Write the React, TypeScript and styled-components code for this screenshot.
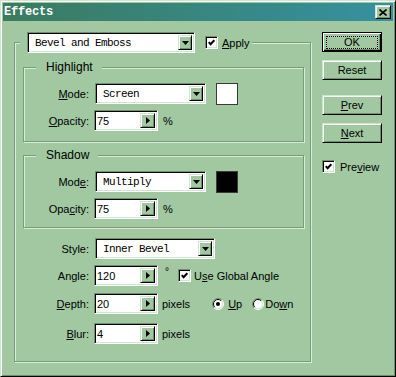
import styled, { createGlobalStyle, css } from 'styled-components'

const FACE = '#a1c8a1'
const HILITE = '#ffffff'
const LIGHT = '#cfe6cf'
const SHADOW = '#6d916d'
const DARK = '#000000'
const ETCH_DARK = '#789c78'
const ETCH_LIGHT = '#d8edd8'

const GlobalStyle = createGlobalStyle`
  * { box-sizing: border-box; }
  html, body { margin: 0; padding: 0; background: ${FACE}; }
  body {
    font-family: "Liberation Sans", Arial, sans-serif;
    font-size: 11px;
    color: #000;
  }
`

const raised = css`
  background: ${FACE};
  border: 1px solid;
  border-color: ${LIGHT} ${DARK} ${DARK} ${LIGHT};
  box-shadow: inset 1px 1px 0 ${HILITE}, inset -1px -1px 0 ${SHADOW};
`

const sunken = css`
  border: 1px solid;
  border-color: ${SHADOW} ${HILITE} ${HILITE} ${SHADOW};
  box-shadow: inset 1px 1px 0 ${DARK}, inset -1px -1px 0 ${LIGHT};
`

const Window = styled.div`
  width: 396px;
  height: 377px;
  padding: 2px;
  display: flex;
  flex-direction: column;
  background: ${FACE};
  border: 1px solid;
  border-color: ${LIGHT} ${DARK} ${DARK} ${LIGHT};
  box-shadow: inset 1px 1px 0 ${HILITE}, inset -1px -1px 0 ${SHADOW};
`

const TitleBar = styled.div`
  height: 18px;
  flex: none;
  display: flex;
  align-items: center;
  justify-content: space-between;
  padding: 0 2px 0 1px;
  background: linear-gradient(to right, #3b7b5f, #3591a0);
`

const TitleText = styled.span`
  color: #fff;
  font-family: "Liberation Mono", "DejaVu Sans Mono", monospace;
  font-weight: bold;
  font-size: 12px;
  letter-spacing: -0.2px;
`

const CloseBox = styled.span`
  ${raised}
  width: 16px;
  height: 14px;
  display: flex;
  align-items: center;
  justify-content: center;
`

const Body = styled.div`
  display: flex;
  align-items: flex-start;
  padding: 11px 0 0 11px;
`

const Frame = styled.fieldset`
  margin: 0;
  padding: 0;
  min-width: 0;
  width: 297px;
  flex: none;
  border: 1px solid ${ETCH_DARK};
  box-shadow: 1px 1px 0 ${ETCH_LIGHT}, inset 1px 1px 0 ${ETCH_LIGHT};
`

const FrameLegend = styled.legend`
  margin-left: 5px;
  padding: 0 2px 0 6px;
  background: ${FACE};
`

const LegendRow = styled.div`
  display: flex;
  align-items: center;
  height: 21px;
`

const FrameBody = styled.div`
  padding: 7px 6px 17px 8px;
`

const Group = styled.fieldset<{ $top?: number }>`
  margin: ${p => p.$top ?? 0}px 0 0 0;
  padding: 0;
  min-width: 0;
  border: 1px solid ${ETCH_DARK};
  box-shadow: 1px 1px 0 ${ETCH_LIGHT}, inset 1px 1px 0 ${ETCH_LIGHT};
`

const GroupLegend = styled.legend`
  margin-left: 12px;
  padding: 0 9px 0 10px;
  font-size: 12px;
  line-height: 14px;
  background: ${FACE};
`

const GroupBody = styled.div<{ $bottom: number }>`
  padding: 9px 0 ${p => p.$bottom}px 0;
`

const Settings = styled.div`
  padding-left: 1px;
`

const Row = styled.div<{ $top?: number }>`
  display: flex;
  align-items: center;
  height: 21px;
  margin-top: ${p => p.$top ?? 0}px;
`

const Label = styled.span`
  flex: none;
  width: 65px;
  margin-right: 5px;
  text-align: right;
  white-space: nowrap;
`

const Key = styled.span`
  text-decoration: underline;
  text-underline-offset: 1px;
`

const Caption = styled.span<{ $gap?: number }>`
  margin-left: ${p => p.$gap ?? 0}px;
  white-space: nowrap;
`

const Degree = styled.span`
  align-self: flex-start;
  margin: 1px 0 0 7px;
  font-size: 10px;
`

const SelectBox = styled.div<{ $width: number }>`
  ${sunken}
  flex: none;
  display: flex;
  align-items: stretch;
  width: ${p => p.$width}px;
  height: 21px;
  margin-left: 1px;
  padding: 2px;
  background: #fff;
`

const SelectText = styled.span`
  flex: 1;
  display: flex;
  align-items: center;
  padding-left: 5px;
  font-family: "Liberation Mono", "DejaVu Sans Mono", monospace;
  font-size: 11px;
  letter-spacing: -0.6px;
  white-space: nowrap;
  overflow: hidden;
`

const ArrowButton = styled.span<{ $width: number }>`
  ${raised}
  flex: none;
  width: ${p => p.$width}px;
  display: flex;
  align-items: center;
  justify-content: center;
`

const NumBox = styled.div`
  ${sunken}
  flex: none;
  display: flex;
  align-items: stretch;
  width: 64px;
  height: 21px;
  padding: 2px;
  background: #fff;
`

const NumValue = styled.span`
  flex: 1;
  display: flex;
  align-items: center;
  padding-left: 0;
`

const Swatch = styled.span<{ $color: string }>`
  flex: none;
  width: 22px;
  height: 22px;
  margin-left: 10px;
  background: ${p => p.$color};
  border: 1px solid #3a3a3a;
`

const CheckBox = styled.span<{ $gap?: number }>`
  ${sunken}
  flex: none;
  width: 13px;
  height: 13px;
  margin-left: ${p => p.$gap ?? 0}px;
  background: #fff;
  display: flex;
  align-items: center;
  justify-content: center;
`

const RadioMark = styled.svg<{ $gap?: number }>`
  flex: none;
  margin-left: ${p => p.$gap ?? 0}px;
`

const Side = styled.div`
  flex: none;
  width: 60px;
  margin-left: 11px;
  display: flex;
  flex-direction: column;
`

const Button = styled.button<{ $top?: number }>`
  ${raised}
  width: 60px;
  height: 20px;
  margin: ${p => p.$top ?? 0}px 0 0 0;
  padding: 0;
  font: inherit;
  color: #000;
  display: flex;
  align-items: center;
  justify-content: center;
`

const DefaultButton = styled(Button)`
  border: 1px solid ${DARK};
  box-shadow: inset 1px 1px 0 ${HILITE}, inset -1px -1px 0 ${DARK}, inset -2px -2px 0 ${SHADOW};
`

const FocusRing = styled.span`
  width: 52px;
  height: 13px;
  border: 1px dotted #000;
  display: flex;
  align-items: center;
  justify-content: center;
`

const CheckRow = styled.div<{ $top?: number }>`
  display: flex;
  align-items: center;
  margin-top: ${p => p.$top ?? 0}px;
`

const Check = () => (
  <svg width="7" height="7" viewBox="0 0 7 7">
    <polyline points="0.8,3.2 2.6,5.2 6.3,1.2" fill="none" stroke="#000" strokeWidth="2" />
  </svg>
)

const Radio = ({ on, gap }: { on?: boolean; gap?: number }) => (
  <RadioMark $gap={gap} width="12" height="12" viewBox="0 0 12 12">
    <circle cx="6" cy="6" r="5" fill="#fff" />
    <path d="M2.1 9.9 A5.5 5.5 0 0 1 9.9 2.1" fill="none" stroke={SHADOW} />
    <path d="M9.9 2.1 A5.5 5.5 0 0 1 2.1 9.9" fill="none" stroke={HILITE} />
    <path d="M2.8 9.2 A4.5 4.5 0 0 1 9.2 2.8" fill="none" stroke="#000" />
    <path d="M9.2 2.8 A4.5 4.5 0 0 1 2.8 9.2" fill="none" stroke={LIGHT} />
    {on && <circle cx="6" cy="6" r="2" fill="#000" />}
  </RadioMark>
)

const Select = ({ width, value }: { width: number; value: string }) => (
  <SelectBox $width={width}>
    <SelectText>{value}</SelectText>
    <ArrowButton $width={14}>
      <svg width="7" height="4" viewBox="0 0 7 4">
        <polygon points="0,0 7,0 3.5,4" fill="#000" />
      </svg>
    </ArrowButton>
  </SelectBox>
)

const NumField = ({ value }: { value: string }) => (
  <NumBox>
    <NumValue>{value}</NumValue>
    <ArrowButton $width={15}>
      <svg width="4" height="7" viewBox="0 0 4 7">
        <polygon points="0,0 4,3.5 0,7" fill="#000" />
      </svg>
    </ArrowButton>
  </NumBox>
)

export default function App() {
  return (
    <>
      <GlobalStyle />
      <Window>
        <TitleBar>
          <TitleText>Effects</TitleText>
          <CloseBox>
            <svg width="8" height="7" viewBox="0 0 8 7">
              <path d="M0.5 0.5 L7.5 6.5 M7.5 0.5 L0.5 6.5" stroke="#000" strokeWidth="1.6" />
            </svg>
          </CloseBox>
        </TitleBar>
        <Body>
          <Frame>
            <FrameLegend>
              <LegendRow>
                <Select width={168} value="Bevel and Emboss" />
                <CheckBox $gap={10}><Check /></CheckBox>
                <Caption $gap={4}><Key>A</Key>pply</Caption>
              </LegendRow>
            </FrameLegend>
            <FrameBody>
              <Group>
                <GroupLegend>Highlight</GroupLegend>
                <GroupBody $bottom={10}>
                  <Row>
                    <Label><Key>M</Key>ode:</Label>
                    <Select width={111} value="Screen" />
                    <Swatch $color="#ffffff" />
                  </Row>
                  <Row $top={6}>
                    <Label><Key>O</Key>pacity:</Label>
                    <NumField value="75" />
                    <Caption $gap={5}>%</Caption>
                  </Row>
                </GroupBody>
              </Group>
              <Group $top={6}>
                <GroupLegend>Shadow</GroupLegend>
                <GroupBody $bottom={8}>
                  <Row>
                    <Label>Mod<Key>e</Key>:</Label>
                    <Select width={111} value="Multiply" />
                    <Swatch $color="#000000" />
                  </Row>
                  <Row $top={6}>
                    <Label>Opa<Key>c</Key>ity:</Label>
                    <NumField value="75" />
                    <Caption $gap={5}>%</Caption>
                  </Row>
                </GroupBody>
              </Group>
              <Settings>
                <Row $top={10}>
                  <Label>Style:</Label>
                  <Select width={120} value="Inner Bevel" />
                </Row>
                <Row $top={6}>
                  <Label>Angle:</Label>
                  <NumField value="120" />
                  <Degree>°</Degree>
                  <CheckBox $gap={9}><Check /></CheckBox>
                  <Caption $gap={3}>U<Key>s</Key>e Global Angle</Caption>
                </Row>
                <Row $top={7}>
                  <Label><Key>D</Key>epth:</Label>
                  <NumField value="20" />
                  <Caption $gap={4}>pixels</Caption>
                  <Radio on gap={22} />
                  <Caption $gap={4}><Key>U</Key>p</Caption>
                  <Radio gap={10} />
                  <Caption $gap={1}>Do<Key>w</Key>n</Caption>
                </Row>
                <Row $top={9}>
                  <Label><Key>B</Key>lur:</Label>
                  <NumField value="4" />
                  <Caption $gap={4}>pixels</Caption>
                </Row>
              </Settings>
            </FrameBody>
          </Frame>
          <Side>
            <DefaultButton>
              <FocusRing>OK</FocusRing>
            </DefaultButton>
            <Button $top={8}>Reset</Button>
            <Button $top={15}><Key>P</Key>rev</Button>
            <Button $top={8}><Key>N</Key>ext</Button>
            <CheckRow $top={17}>
              <CheckBox><Check /></CheckBox>
              <Caption $gap={5}>Pre<Key>v</Key>iew</Caption>
            </CheckRow>
          </Side>
        </Body>
      </Window>
    </>
  )
}
